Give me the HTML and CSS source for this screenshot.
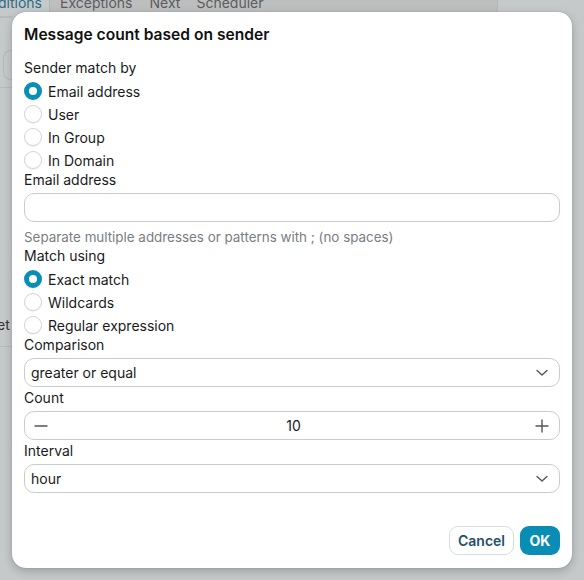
FILE: index.html
```html
<!DOCTYPE html>
<html>
<head>
<meta charset="utf-8">
<link rel="stylesheet" href="styles.css">
</head>
<body>
<div class="page">
  <div class="tabbar">
    <div class="tab active"><span>Conditions</span></div>
    <div class="tab">Exceptions</div>
    <div class="tab">Next</div>
    <div class="tab">Scheduler</div>
    <div class="tab-fill"></div>
    <div class="tab-rest"></div>
  </div>
  <div class="side">
    <div class="side-input"></div>
    <div class="side-line"></div>
    <div class="side-text">et</div>
    <div class="side-line2"></div>
  </div>
</div>

<div class="dialog">
  <h1 class="title">Message count based on sender</h1>

  <div class="label">Sender match by</div>
  <div class="radios">
    <label class="radio"><span class="dot checked"></span>Email address</label>
    <label class="radio"><span class="dot"></span>User</label>
    <label class="radio"><span class="dot"></span>In Group</label>
    <label class="radio"><span class="dot"></span>In Domain</label>
  </div>

  <div class="label">Email address</div>
  <div class="field"></div>
  <div class="help">Separate multiple addresses or patterns with ; (no spaces)</div>

  <div class="label">Match using</div>
  <div class="radios">
    <label class="radio"><span class="dot checked"></span>Exact match</label>
    <label class="radio"><span class="dot"></span>Wildcards</label>
    <label class="radio"><span class="dot"></span>Regular expression</label>
  </div>

  <div class="label">Comparison</div>
  <div class="field select">
    <span>greater or equal</span>
    <svg class="chev" width="12" height="8" viewBox="0 0 12 8"><path d="M1 1.5 L6 6 L11 1.5" fill="none" stroke="#555" stroke-width="1.4" stroke-linecap="round" stroke-linejoin="round"/></svg>
  </div>

  <div class="label lab-tight">Count</div>
  <div class="field stepper">
    <svg width="14" height="14" viewBox="0 0 14 14"><path d="M1 7 H13" stroke="#555" stroke-width="1.4" stroke-linecap="round"/></svg>
    <span class="num">10</span>
    <svg width="14" height="14" viewBox="0 0 14 14"><path d="M1 7 H13 M7 1 V13" stroke="#555" stroke-width="1.4" stroke-linecap="round"/></svg>
  </div>

  <div class="label lab-tight">Interval</div>
  <div class="field select">
    <span>hour</span>
    <svg class="chev" width="12" height="8" viewBox="0 0 12 8"><path d="M1 1.5 L6 6 L11 1.5" fill="none" stroke="#555" stroke-width="1.4" stroke-linecap="round" stroke-linejoin="round"/></svg>
  </div>

  <div class="actions">
    <button class="btn cancel">Cancel</button>
    <button class="btn ok">OK</button>
  </div>
</div>
</body>
</html>
```

FILE: styles.css
```css
* { box-sizing: border-box; }
html, body {
  margin: 0;
  padding: 0;
}
body {
  width: 584px;
  height: 580px;
  overflow: hidden;
  background: #c6c9c9;
  font-family: "Inter", "Noto Sans", "Liberation Sans", sans-serif;
  color: #1a1a1a;
  position: relative;
}

.page {
  width: 584px;
  height: 580px;
}
.tabbar {
  display: flex;
  height: 12px;
  background: #bdbebe;
  overflow: hidden;
  font-size: 14px;
  line-height: 16px;
  color: #5a5d5e;
}
.tab {
  margin-top: -5px;
  padding: 0 9px;
  white-space: nowrap;
}
.tab.active {
  margin-top: 0;
  width: 50px;
  padding: 0;
  background: #c5c9ca;
  color: #2e6b86;
  overflow: hidden;
  border-right: 1px solid #b3b5b5;
  display: flex;
  justify-content: flex-end;
}
.tab.active span {
  margin-top: -5px;
  padding-right: 7px;
}
.tab:nth-child(2) { padding-left: 10px; }
.tab:nth-child(3) { padding-left: 8px; padding-right: 8px; }
.tab:nth-child(4) { padding-left: 8px; }
.tab-fill { flex: 1; }
.tab-rest {
  width: 87px;
  background: #c6c9c9;
  border-left: 1px solid #b7b9b9;
}

.side {
  width: 12px;
  height: 568px;
  border-top: 2px solid #b9bbbb;
  margin-top: 4px;
  position: relative;
}
.side-input {
  margin: 32px 0 0 3px;
  height: 30px;
  border: 1px solid #b7b9b9;
  border-right: none;
  border-radius: 8px 0 0 8px;
}
.side-line {
  margin-top: 7px;
  height: 1px;
  background: #b8baba;
}
.side-text {
  margin-top: 228px;
  font-size: 14px;
  color: #333;
  margin-left: -3px;
}
.side-line2 {
  margin-top: 13px;
  height: 1px;
  background: #b8baba;
}

.dialog {
  position: absolute;
  left: 12px;
  top: 12px;
  width: 560px;
  height: 556px;
  background: #fff;
  border-radius: 14px;
  box-shadow: 0 3px 10px rgba(0, 0, 0, 0.22), 0 0 1px rgba(0,0,0,0.3);
  padding: 13px 12px 13px 12px;
  display: flex;
  flex-direction: column;
}
.title {
  margin: 0;
  font-size: 15.6px;
  font-weight: 600;
  line-height: 20px;
  color: #111;
  margin-bottom: 13px;
}
.label {
  font-size: 14px;
  line-height: 20px;
  color: #1a1a1a;
}
.lab-tight { margin-top: 1px; }
.radios {
  display: flex;
  flex-direction: column;
  gap: 3px;
  margin-top: 3px;
}
.radio {
  display: flex;
  align-items: center;
  height: 20px;
  font-size: 14px;
  gap: 6px;
  color: #1a1a1a;
}
.dot {
  width: 18px;
  height: 18px;
  border-radius: 50%;
  border: 1px solid #d3d6d6;
  background: #fff;
  box-shadow: 0 1px 1px rgba(0,0,0,0.06);
  flex: none;
}
.dot.checked {
  border: 5.5px solid #0b8eb3;
  background: #fff;
}
.field {
  margin-top: 3px;
  height: 29px;
  width: 536px;
  border: 1px solid #c9cccc;
  border-radius: 10px;
  background: #fff;
  flex: none;
}
.help {
  margin-top: 6px;
  font-size: 13.4px;
  line-height: 18px;
  color: #7a7d7f;
}
.select {
  display: flex;
  align-items: center;
  justify-content: space-between;
  padding: 0 11px 0 6px;
  font-size: 14px;
  color: #1a1a1a;
}
.chev { margin-top: 1px; }
.stepper {
  display: flex;
  align-items: center;
  justify-content: space-between;
  padding: 0 10px 0 9px;
  font-size: 14px;
}
.num { margin-left: 4px; }
.actions {
  margin-top: auto;
  display: flex;
  justify-content: flex-end;
  gap: 6px;
  padding-right: 0;
}
.btn {
  height: 29px;
  border-radius: 9px;
  font-family: "Inter", "Noto Sans", "Liberation Sans", sans-serif;
  font-size: 14px;
  font-weight: 600;
  padding: 0;
}
.cancel {
  width: 65px;
  background: #fff;
  border: 1px solid #d9dddd;
  color: #1f4f6c;
}
.ok {
  width: 40px;
  background: #0a8db4;
  border: none;
  color: #fff;
  font-weight: 700;
}
```
